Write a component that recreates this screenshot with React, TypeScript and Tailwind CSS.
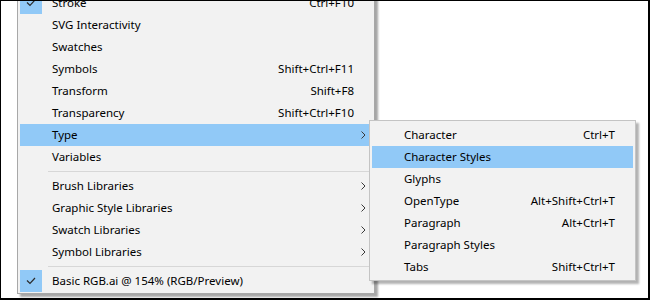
import React from "react";

type Item =
  | { sep: true }
  | {
      sep?: false;
      label: string;
      shortcut?: string;
      sub?: boolean;
      checked?: boolean;
      active?: boolean;
    };

const mainItems: Item[] = [
  { label: "Stroke", shortcut: "Ctrl+F10", checked: true },
  { label: "SVG Interactivity" },
  { label: "Swatches" },
  { label: "Symbols", shortcut: "Shift+Ctrl+F11" },
  { label: "Transform", shortcut: "Shift+F8" },
  { label: "Transparency", shortcut: "Shift+Ctrl+F10" },
  { label: "Type", sub: true, active: true },
  { label: "Variables" },
  { sep: true },
  { label: "Brush Libraries", sub: true },
  { label: "Graphic Style Libraries", sub: true },
  { label: "Swatch Libraries", sub: true },
  { label: "Symbol Libraries", sub: true },
  { sep: true },
  { label: "Basic RGB.ai @ 154% (RGB/Preview)", checked: true },
];

const typeItems: Item[] = [
  { label: "Character", shortcut: "Ctrl+T" },
  { label: "Character Styles", active: true },
  { label: "Glyphs" },
  { label: "OpenType", shortcut: "Alt+Shift+Ctrl+T" },
  { label: "Paragraph", shortcut: "Alt+Ctrl+T" },
  { label: "Paragraph Styles" },
  { label: "Tabs", shortcut: "Shift+Ctrl+T" },
];

function Check() {
  return (
    <svg width="10" height="8" viewBox="0 0 10 8" fill="none">
      <path d="M1 3.5 L4 6.5 L9 1" stroke="#2b2b2b" strokeWidth="1.2" />
    </svg>
  );
}

function Arrow() {
  return (
    <svg width="5" height="8" viewBox="0 0 5 8" fill="none">
      <path d="M0.5 0.5 L4 4 L0.5 7.5" stroke="#3a3a3a" strokeWidth="1" />
    </svg>
  );
}

function MenuList({ items }: { items: Item[] }) {
  return (
    <>
      {items.map((it, i) =>
        it.sep ? (
          <div key={i} className="h-[7px] flex items-center pl-[28px]">
            <div className="h-px w-full bg-[#d7d7d7]" />
          </div>
        ) : (
          <div
            key={i}
            className={`h-[22px] flex items-center ${it.active ? "bg-[#91c9f7]" : ""}`}
          >
            <div
              className={`w-[22px] h-[22px] flex items-center justify-center ${
                it.checked ? "bg-[#91c9f7]" : ""
              }`}
            >
              {it.checked && <Check />}
            </div>
            <span className="ml-[10px] flex-1 whitespace-nowrap">{it.label}</span>
            {it.shortcut && <span className="whitespace-nowrap">{it.shortcut}</span>}
            <div className="w-[18px] flex items-center justify-center">
              {it.sub && <Arrow />}
            </div>
          </div>
        )
      )}
    </>
  );
}

export default function App() {
  return (
    <div
      className="relative w-[650px] h-[300px] overflow-hidden bg-white border-black border-t border-l border-r-2 border-b-2 text-[11.5px] text-black"
      style={{ fontFamily: '"Noto Sans", "Open Sans", sans-serif' }}
    >
      <div className="absolute left-[16px] top-[-12px] w-[358px] bg-[#f2f2f2] border border-[#a8a8a8] pt-[2px] px-[2px] pb-[1px] shadow-[3px_3px_2px_rgba(0,0,0,0.35)]">
        <MenuList items={mainItems} />
      </div>
      <div className="absolute left-[368px] top-[119px] w-[267px] bg-[#f2f2f2] border border-[#c4c4c4] pt-[3px] px-[2px] pb-[2px] shadow-[3px_3px_2px_rgba(0,0,0,0.3)]">
        <MenuList items={typeItems} />
      </div>
    </div>
  );
}
